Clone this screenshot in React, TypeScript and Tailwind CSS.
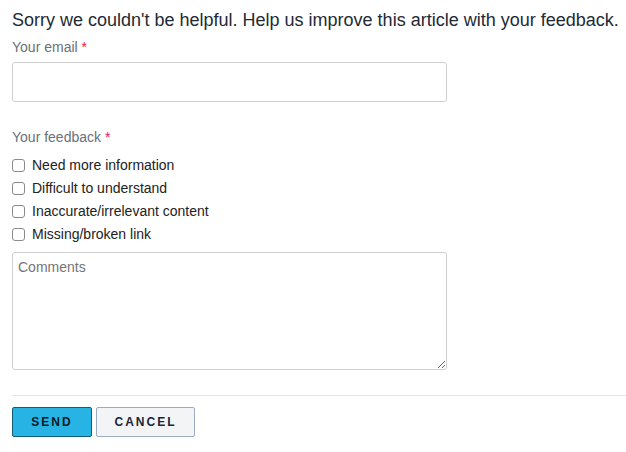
import React from "react";

const items = [
  "Need more information",
  "Difficult to understand",
  "Inaccurate/irrelevant content",
  "Missing/broken link",
];

export default function App() {
  return (
    <div className="w-[626px] h-[452px] bg-white pl-[12px] pt-[10px] font-['Liberation_Sans',Arial,sans-serif]">
      <h1 className="text-[18px] leading-[21px] text-[#222a35] font-normal">
        Sorry we couldn't be helpful. Help us improve this article with your feedback.
      </h1>
      <div className="mt-[6px] text-[14px] leading-[20px] text-[#6b7078]">
        Your email <span className="text-[#e3174f]">*</span>
      </div>
      <input
        type="email"
        className="mt-[5px] block w-[435px] h-[40px] border border-[#cfcfcf] rounded-[3px] outline-none px-[6px]"
      />
      <div className="mt-[25px] text-[14px] leading-[20px] text-[#6b7078]">
        Your feedback <span className="text-[#e3174f]">*</span>
      </div>
      <div className="mt-[7px] flex flex-col">
        {items.map((t) => (
          <label key={t} className="h-[23px] flex items-center text-[14px] text-[#222]">
            <span className="w-[13px] h-[13px] border border-[#8a8a8a] rounded-[3px] bg-white" />
            <span className="ml-[7px]">{t}</span>
          </label>
        ))}
      </div>
      <textarea
        placeholder="Comments"
        className="mt-[6px] block w-[435px] h-[118px] border border-[#cfcfcf] rounded-[3px] outline-none px-[5px] py-[5px] text-[14px] leading-[18px] placeholder:text-[#757575] font-['Liberation_Sans',Arial,sans-serif]"
      />
      <div className="mt-[25px] h-px bg-[#e5e5e5]" />
      <div className="mt-[11px] flex gap-[4px]">
        <button className="w-[80px] h-[30px] bg-[#27b4e4] border border-[#0d5e76] rounded-[2px] text-[12px] font-bold tracking-[2px] text-[#0b1a26]">
          SEND
        </button>
        <button className="w-[99px] h-[30px] bg-[#f3f4f6] border border-[#9aabbd] rounded-[2px] text-[12px] font-bold tracking-[2px] text-[#1a2636]">
          CANCEL
        </button>
      </div>
    </div>
  );
}
